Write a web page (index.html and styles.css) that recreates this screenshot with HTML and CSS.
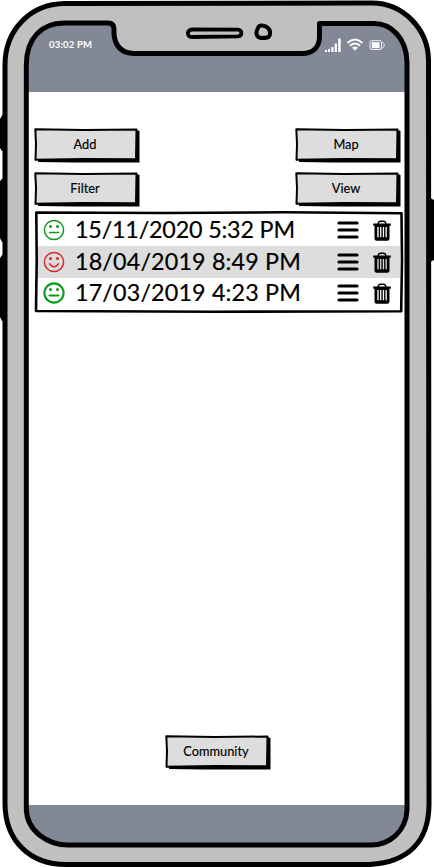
FILE: index.html
```html
<!DOCTYPE html>
<html lang="en">
<head>
<meta charset="utf-8">
<title>Entries</title>
<link rel="stylesheet" href="styles.css">
</head>
<body>
<svg class="defs" aria-hidden="true">
  <symbol id="box" viewBox="0 0 106 35">
    <path d="M4 6 104.500 2.500 105.500 3V34.500H38L4 34Z" fill="#000"/>
    <path d="M1.300 1.200 50 2 102.500 1.500 102 31.200 50 31 1.500 31.700 2 16Z" fill="#ddd" stroke="#000" stroke-width="2" stroke-linejoin="round"/>
  </symbol>
  <symbol id="neutral" viewBox="0 0 22 22">
    <circle cx="11" cy="11" r="9.600" fill="none" stroke="currentColor"/>
    <circle cx="7.500" cy="7.600" r="1.500" fill="currentColor" stroke="none"/><circle cx="14.500" cy="7.600" r="1.500" fill="currentColor" stroke="none"/>
    <path d="M6.500 13.500H15.500" fill="none" stroke="currentColor" stroke-linecap="round"/>
  </symbol>
  <symbol id="smile" viewBox="0 0 22 22">
    <circle cx="11" cy="11" r="9.600" fill="none" stroke="currentColor"/>
    <circle cx="7.500" cy="7.600" r="1.500" fill="currentColor" stroke="none"/><circle cx="14.500" cy="7.600" r="1.500" fill="currentColor" stroke="none"/>
    <path d="M6.500 12.800Q11 19 15.500 12.800" fill="none" stroke="currentColor" stroke-linecap="round"/>
  </symbol>
  <symbol id="menu" viewBox="0 0 22 18">
    <path d="M2 2H20M2 9H20M2 16H20" stroke="#000" stroke-width="3.200" stroke-linecap="round"/>
  </symbol>
  <symbol id="trash" viewBox="0 0 18 21">
    <path d="M5 4Q5.500 1.200 7.500 1.200H10.500Q12.500 1.200 13 4" fill="none" stroke="#000" stroke-width="1.400"/>
    <path d="M.2 3.500H17.800V5.700H.2Z"/>
    <path fill-rule="evenodd" d="M1.500 5H16.500V18.500Q16.500 20.700 14.300 20.700H3.700Q1.500 20.700 1.500 18.500ZM4.300 7V17.300H5.700V7ZM7.100 7V17.300H8.400V7ZM9.800 7V17.300H11.100V7ZM12.500 7V17.300H13.800V7Z"/>
  </symbol>
</svg>
<div class="phone">
  <header class="status">
    <span class="time">03:02 PM</span>
    <svg class="indicators" width="62" height="16" viewBox="0 0 62 16" fill="#fff">
      <path d="M1 12H3V14H1ZM4 11H6V14H4ZM7.300 9H9.500V14H7.300ZM10.700 5.500H12.900V14H10.700ZM14.200.5H16.700V14H14.200Z"/>
      <g fill="none" stroke="#fff" stroke-width="1.900"><path d="M23.500 5Q31-1.800 38.500 5"/><path d="M26 7.700Q31 3.300 36 7.700"/></g>
      <path d="M28 9.800Q31 7.300 34 9.800L31 12.500Z"/>
      <rect x="46" y="2.700" width="11.500" height="8.800" rx="1.500" fill="none" stroke="#eef0f5"/><path d="M47.700 4.200H55.500V10.200H47.700Z"/><path d="M58 3.700Q62.500 7 58 10.700" fill="none" stroke="#eef0f5"/>
    </svg>
  </header>
  <main class="content">
    <div class="actions">
      <button class="btn"><svg class="btn-box"><use href="#box"/></svg><span>Add</span></button>
      <button class="btn"><svg class="btn-box"><use href="#box"/></svg><span>Map</span></button>
      <button class="btn"><svg class="btn-box"><use href="#box"/></svg><span>Filter</span></button>
      <button class="btn"><svg class="btn-box"><use href="#box"/></svg><span>View</span></button>
    </div>
    <div class="entries">
      <div class="entry"><svg class="face green"><use href="#neutral"/></svg><span class="date first">15/11/2020 5:32 PM</span><svg class="menu"><use href="#menu"/></svg><svg class="trash"><use href="#trash"/></svg></div>
      <div class="entry shaded"><svg class="face red"><use href="#smile"/></svg><span class="date">18/04/2019 8:49 PM</span><svg class="menu"><use href="#menu"/></svg><svg class="trash"><use href="#trash"/></svg></div>
      <div class="entry last"><svg class="face green bold"><use href="#neutral"/></svg><span class="date">17/03/2019 4:23 PM</span><svg class="menu"><use href="#menu"/></svg><svg class="trash"><use href="#trash"/></svg></div>
      <svg class="outline" viewBox="0 0 370 104" aria-hidden="true"><path d="M2.300 2.500 130 3 250 2.300 367.500 3.300 368 50 367.200 101.200 180 101.800 2 101 2.700 50Z" fill="none" stroke="#000" stroke-width="2.600" stroke-linejoin="round"/></svg>
    </div>
    <button class="btn community"><svg class="btn-box"><use href="#box"/></svg><span>Community</span></button>
  </main>
  <footer class="bottom-bar"></footer>
  <svg class="frame" viewBox="0 0 434 867" aria-hidden="true">
    <path d="M0 119 3 114H6V151H2L0 148ZM0 181 3 178H6V242H2L0 238ZM0 258 3 254V242H6V321H2L0 317ZM430 198 434 200V260L430 262Z"/>
    <path fill="#c0c0c0" fill-rule="evenodd" stroke="#000" stroke-width="5" stroke-linejoin="round" d="M5 65C5 31 29 4 65 3.500L372 3C402 3 428.500 28 428.500 61L429 805C428.500 842 408 862 370 864.500H66C31 864.500 5 842 5 803ZM26.300 65C26.300 38 42 23 64 23H108Q114 23 114 29V34C115 46 121 53 134 53.500H302C314 53.500 319.500 46 319.500 36V23.500H374C391 23.500 406.500 38 407 62V810C406 831 390 845 371 845H68C49 845 26.300 832 26.300 808Z"/>
    <path fill="none" stroke="#000" stroke-width="3.800" d="M192 29.500 238 29.700C242.500 29.700 242.500 36 238 36.300L192 37C186 37 187 29.500 192 29.500Z"/>
    <path fill="none" stroke="#000" stroke-width="4" d="M261 25.500C266 25 271 29 270 34C269.500 38 266 38 261 38C255 37 256 31 258 28Q259 25.500 261 25.500Z"/>
  </svg>
</div>
</body>
</html>
```

FILE: styles.css
```css
* { box-sizing: border-box; }

body {
  margin: 0;
  background: #fff;
  font-family: Lato, "Open Sans", sans-serif;
  color: #000;
}

svg { display: block; flex: none; }
.defs { position: absolute; width: 0; height: 0; }

.phone {
  position: relative;
  width: 434px;
  height: 867px;
  overflow: hidden;
  display: flex;
  flex-direction: column;
  padding: 20px 29px 22px 28px;
}

.frame {
  position: absolute;
  inset: 0;
  width: 434px;
  height: 867px;
  pointer-events: none;
}

.status {
  height: 72px;
  background: #838896;
  display: flex;
  justify-content: space-between;
  padding: 18px 19px 0 21px;
}

.time {
  color: #fff;
  font: bold 9.5px/13px Lato, sans-serif;
  letter-spacing: 0.2px;
}

.content {
  height: 713px;
  padding: 36px 3px 0 6px;
  display: flex;
  flex-direction: column;
}

.actions {
  display: grid;
  grid-template-columns: 106px 106px;
  justify-content: space-between;
  row-gap: 9px;
  padding-right: 1px;
}

.btn {
  position: relative;
  width: 106px;
  height: 35px;
  padding: 0 4px 3px 0;
  border: 0;
  background: none;
  color: #000;
  font: 12.8px/20px Lato, sans-serif;
  -webkit-text-stroke: 0.15px #000;
}

.btn span { position: relative; }
.btn-box { position: absolute; inset: 0; width: 106px; height: 35px; }

.entries {
  position: relative;
  margin-top: 3px;
  padding: 4px 2px 0 3px;
  height: 104px;
}

.entry {
  height: 32px;
  display: flex;
  align-items: center;
  padding: 0 8px 0 6px;
}

.shaded { background: #ddd; }
.last { height: 30px; }

.outline { position: absolute; inset: 0 auto auto 0; width: 370px; height: 104px; }

.face { width: 22px; height: 22px; stroke-width: 1.5; }
.green { color: #0a9a1c; }
.red { color: #d52b30; }
.bold { stroke-width: 2.1; }

.date {
  width: 258px;
  margin-left: 10px;
  padding-bottom: 3px;
  font-size: 23.3px;
  line-height: 28px;
  white-space: nowrap;
  letter-spacing: 0.16px;
  -webkit-text-stroke: 0.2px #000;
}

.first { letter-spacing: -0.18px; }

.menu { width: 22px; height: 18px; margin-left: 4px; }
.trash { width: 18px; height: 21px; margin-left: 14px; }

.community { margin: auto 0 35px 131px; }

.bottom-bar { flex: 1; background: #838896; }
```
